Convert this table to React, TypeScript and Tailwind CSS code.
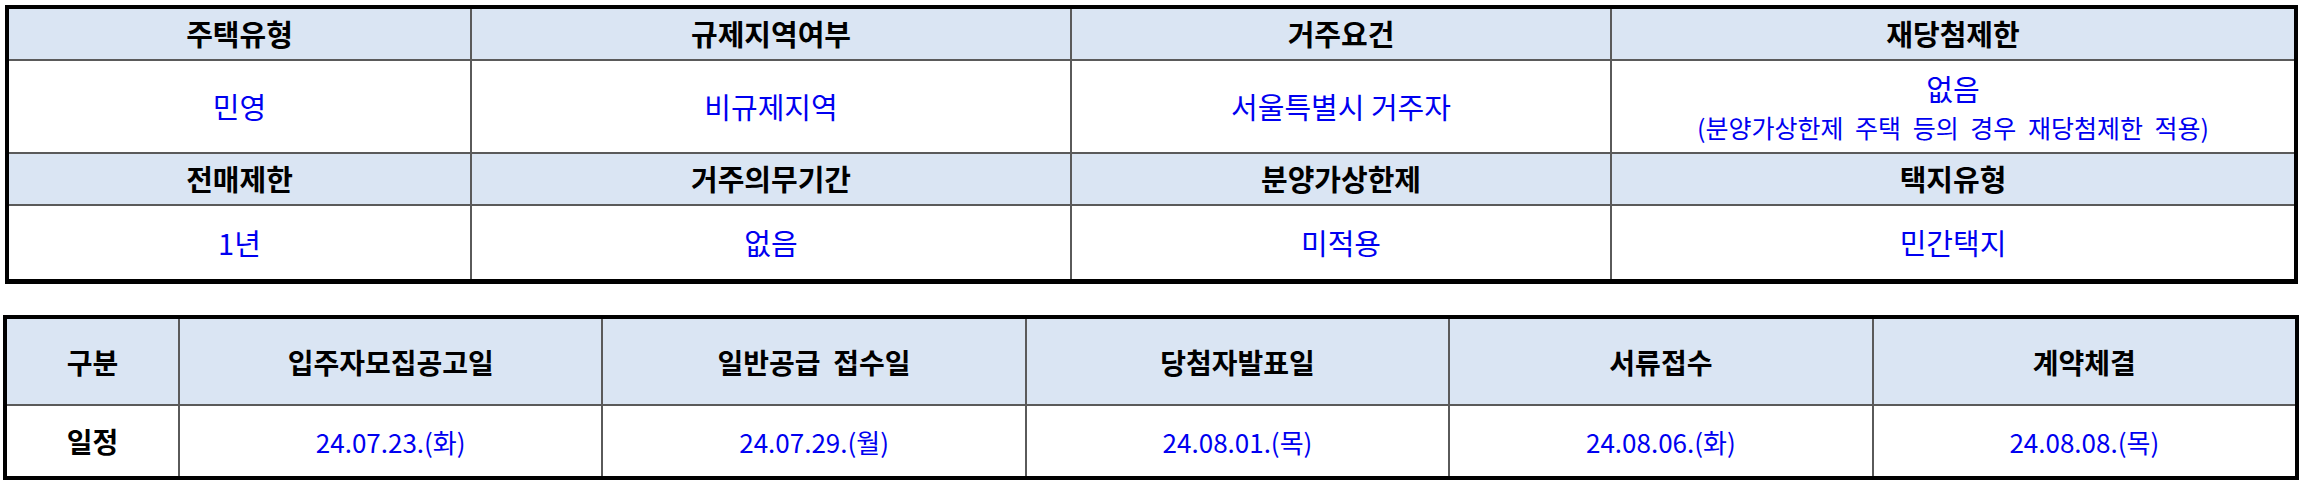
const summaryRows = [
    {
        heads: ['주택유형', '규제지역여부', '거주요건', '재당첨제한'],
        values: ['민영', '비규제지역', '서울특별시 거주자', '없음'],
    },
    {
        heads: ['전매제한', '거주의무기간', '분양가상한제', '택지유형'],
        values: ['1년', '없음', '미적용', '민간택지'],
    },
];

const schedule = [
    { label: '입주자모집공고일', date: '24.07.23.(화)' },
    { label: '일반공급  접수일', date: '24.07.29.(월)' },
    { label: '당첨자발표일', date: '24.08.01.(목)' },
    { label: '서류접수', date: '24.08.06.(화)' },
    { label: '계약체결', date: '24.08.08.(목)' },
];

const head = 'bg-[#dae5f3] flex items-center justify-center font-bold text-black';
const cell = 'bg-white flex items-center justify-center text-[#0000f0]';

export default function App() {
    return (
        <div className="w-[2305px] h-[483px] bg-white font-['Noto_Sans_CJK_KR','Noto_Sans',sans-serif]">
            {/* 기본 정보 */}
            <div className="ml-[5px] pt-[5px] w-[2293px]">
                <div className="border-[4px] border-b-[5px] border-black bg-[#5a5a5a] grid grid-cols-[461px_598px_538px_1fr] grid-rows-[50px_91px_50px_73px] gap-[2px]">
                    {summaryRows.map((row, r) => (
                        <>
                            {row.heads.map((h) => (
                                <div key={`h${r}${h}`} className={`${head} text-[29px]`}>{h}</div>
                            ))}
                            {row.values.map((v, i) => (
                                <div key={`v${r}${i}`} className={`${cell} text-[29px]`}>
                                    {r === 0 && i === 3 ? (
                                        <div className="flex flex-col items-center">
                                            <span className="leading-[40px]">{v}</span>
                                            <span className="text-[25px] leading-[38px] [word-spacing:6px]">(분양가상한제 주택 등의 경우 재당첨제한 적용)</span>
                                        </div>
                                    ) : (
                                        v
                                    )}
                                </div>
                            ))}
                        </>
                    ))}
                </div>
            </div>

            {/* 일정 */}
            <div className="ml-[3px] mt-[31px] w-[2296px]">
                <div className="border-[4px] border-black bg-[#5a5a5a] grid grid-cols-[171px_repeat(5,1fr)] grid-rows-[85px_70px] gap-[2px]">
                    <div className={`${head} text-[28px]`}>구분</div>
                    {schedule.map((s) => (
                        <div key={s.label} className={`${head} text-[28px] whitespace-pre`}>{s.label}</div>
                    ))}
                    <div className="bg-white flex items-center justify-center text-[28px] font-bold text-black">일정</div>
                    {schedule.map((s) => (
                        <div key={s.date} className={`${cell} text-[26px]`}>{s.date}</div>
                    ))}
                </div>
            </div>
        </div>
    );
}
